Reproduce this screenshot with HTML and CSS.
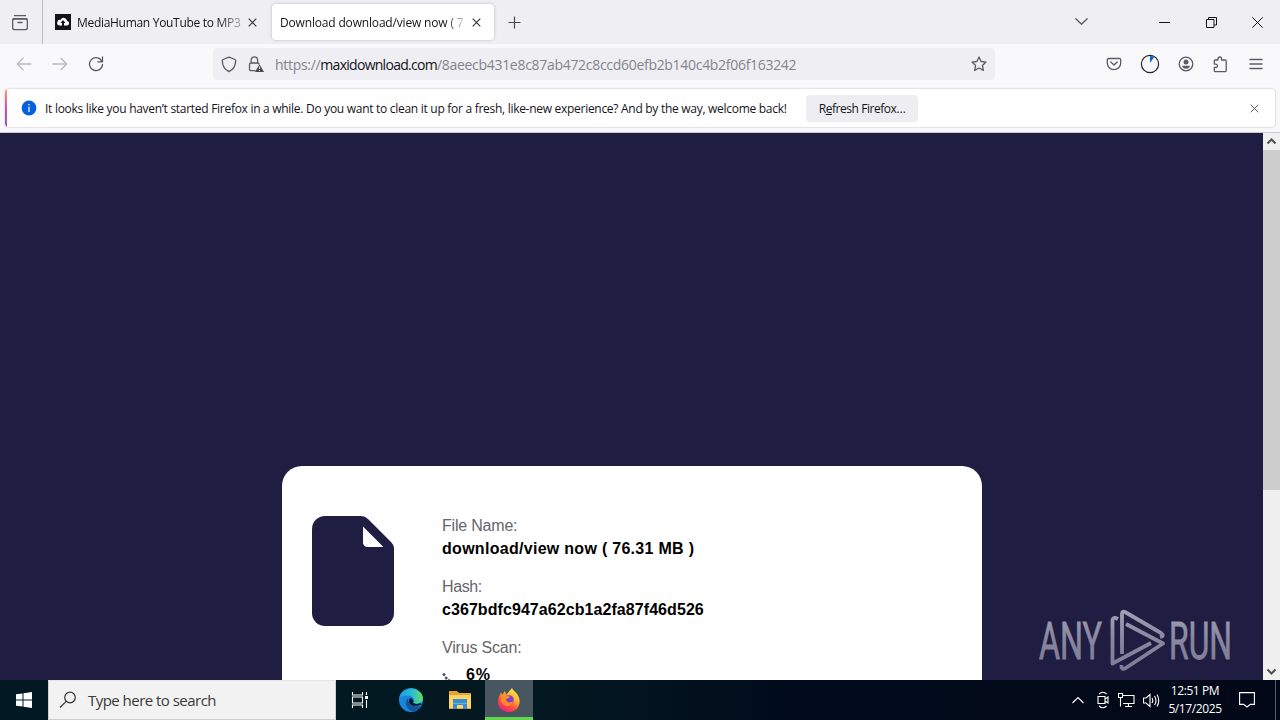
FILE: index.html
```html
<!DOCTYPE html>
<html lang="en">
<head>
<meta charset="utf-8">
<title>Download download/view now</title>
<link rel="stylesheet" href="styles.css">
</head>
<body>
<div class="screen">
  <header class="tabs">
    <div class="overview"><svg width="18" height="18" viewBox="0 0 18 18" class="line"><path d="M3.5 1.7h11M2 5h14"/><rect x="1.7" y="4.7" width="14.6" height="11" rx="2"/><path d="M7 8.5h4"/></svg></div>
    <div class="tab">
      <svg width="16" height="16" viewBox="0 0 16 16"><rect width="16" height="16" fill="#15141a"/><path d="M4.5 11.5h7a2.3 2.3 0 0 0 .6-4.6 3.4 3.4 0 0 0-6.5-1A2.8 2.8 0 0 0 4.5 11.500z" fill="#fff"/><path d="M8 6l2.500 3H9v3H7V9H5.500z" fill="#15141a"/></svg>
      <span class="tab-title t1">MediaHuman YouTube to MP3</span>
      <svg class="close" width="9" height="9" viewBox="0 0 9 9"><path d="M.7.7l7.600 7.600M8.300.7L.7 8.300"/></svg>
    </div>
    <div class="tab active">
      <span class="tab-title t2">Download download/view now ( 76.31 MB )</span>
      <svg class="close" width="9" height="9" viewBox="0 0 9 9"><path d="M.7.7l7.600 7.600M8.300.7L.7 8.300"/></svg>
    </div>
    <svg class="plus" width="13" height="13" viewBox="0 0 13 13"><path d="M6.500 .5v12M.5 6.500h12"/></svg>
    <div class="window-controls">
      <svg width="13" height="8" viewBox="0 0 13 8" class="line"><path d="M.8.8l5.700 5.500L12.200.8"/></svg>
      <svg class="minimize" width="11" height="11" viewBox="0 0 11 11"><path d="M0 5.500h11"/></svg>
      <svg class="restore" width="11" height="11" viewBox="0 0 11 11"><path d="M.5 2.500h7.500v8H.5zM2.500 2.500v-2h8v7.500H8"/></svg>
      <svg class="quit" width="11" height="11" viewBox="0 0 11 11"><path d="M.3.3l10.400 10.400M10.700.3L.3 10.700"/></svg>
    </div>
  </header>

  <nav class="toolbar">
    <div class="history">
      <svg width="16" height="14" viewBox="0 0 16 14" class="line faded"><path d="M15 7H1.500M7 1.300L1.300 7 7 12.700"/></svg>
      <svg width="16" height="14" viewBox="0 0 16 14" class="line faded"><path d="M1 7h13.500M9 1.300L14.700 7 9 12.700"/></svg>
      <svg width="16" height="16" viewBox="0 0 16 16" class="line"><path d="M13.700 5A6.500 6.500 0 1 0 14.500 8.500M14.500 1v4.800H9.700"/></svg>
    </div>
    <div class="urlbar">
      <svg width="16" height="17" viewBox="0 0 16 17" class="line"><path d="M8 1.200l6 2.300c.5.200.7.500.7 1 0 5-1.500 8.500-6.700 11.200C2.800 13 1.300 9.500 1.300 4.500c0-.5.200-.8.700-1z"/></svg>
      <svg class="lock" width="17" height="17" viewBox="0 0 17 17"><path d="M7 14.700H3a1.500 1.500 0 0 1-1.500-1.500V8.500A1.500 1.500 0 0 1 3 7h6.500c.8 0 1.300.3 1.500 1M3.200 7V4a3.200 3.200 0 0 1 6.400 0v3" class="line"/><path d="M11.500 8.200L16 16H7z" fill="#4c4b54"/><path d="M11.500 10.500v2.600M11.500 14v1" stroke="#eeeef2" stroke-width="1"/></svg>
      <span class="url">https://<b>maxidownload.com</b>/8aeecb431e8c87ab472c8ccd60efb2b140c4b2f06f163242</span>
      <svg class="star" width="16" height="16" viewBox="0 0 16 16"><path class="line" d="M8 1l2.100 4.500 4.900.6-3.600 3.300 1 5L8 12l-4.400 2.400 1-5L1 6.100l4.900-.6z"/></svg>
    </div>
    <div class="actions">
      <svg width="16" height="14" viewBox="0 0 16 14" class="line"><path d="M2.500 1.500h11a1.200 1.200 0 0 1 1.200 1.200V6a6.700 6.700 0 0 1-13.400 0V2.700a1.200 1.200 0 0 1 1.200-1.200zM4.800 5L8 8l3.200-3"/></svg>
      <svg width="20" height="20" viewBox="0 0 20 20"><circle cx="10" cy="10" r="8.600" fill="none" stroke="#24232c" stroke-width="1.200"/><path d="M10 9V2q2.300 0 4 1.200z" fill="#0762c8"/></svg>
      <svg width="16" height="16" viewBox="0 0 16 16"><circle cx="8" cy="8" r="6.800" class="line"/><circle cx="8" cy="6" r="2.500" fill="#5b5b66"/><path d="M4 9.800h8q-.7 3-4 3t-4-3z" fill="#5b5b66"/></svg>
      <svg width="16" height="17" viewBox="0 0 16 17"><path class="line" d="M6 4V2.800a1.800 1.800 0 0 1 3.600 0V4h3.600a1 1 0 0 1 1 1v9.700a1 1 0 0 1-1 1H3.300a1 1 0 0 1-1-1V11.500h1.500a1.700 1.700 0 0 0 0-3.400H2.300V5a1 1 0 0 1 1-1z"/></svg>
      <svg width="14" height="12" viewBox="0 0 14 12" class="line menu"><path d="M1 1.500h12M1 6h12M1 10.500h12"/></svg>
    </div>
  </nav>

  <div class="notice-wrap">
    <div class="notice">
      <svg width="16" height="16" viewBox="0 0 16 16"><circle cx="8" cy="8" r="7.400" fill="#0560df"/><path d="M8 4v1.500M8 6.800V12" stroke="#fff" stroke-width="1.200"/></svg>
      <span class="message">It looks like you haven’t started Firefox in a while. Do you want to clean it up for a fresh, like-new experience? And by the way, welcome back!</span>
      <button class="refresh"><span>R<u>e</u>fresh Firefox…</span></button>
      <svg class="close dismiss" width="9" height="9" viewBox="0 0 9 9"><path d="M.7.7l7.600 7.600M8.300.7L.7 8.300"/></svg>
    </div>
  </div>

  <div class="viewport">
    <main class="page">
      <section class="card">
        <svg class="file" width="82" height="110" viewBox="0 0 82 110"><path d="M13 0H49q4 0 7 3L79 26q3 3 3 6V97a13 13 0 0 1-13 13H13A13 13 0 0 1 0 97V13A13 13 0 0 1 13 0z" fill="#1f1d42"/><path d="M51 10.500L71.500 31H55.500a4.500 4.500 0 0 1-4.500-4.500z" fill="#fff"/></svg>
        <dl class="details">
          <dt class="d1">File Name:</dt><dd class="v1">download/view now ( 76.31 MB )</dd>
          <dt class="d2">Hash:</dt><dd class="v2">c367bdfc947a62cb1a2fa87f46d526</dd>
          <dt class="d3">Virus Scan:</dt>
          <dd class="scan"><svg width="24" height="16" viewBox="0 0 24 16"><g fill="#4c5964"><circle cx="2" cy="7.500" r="1.500"/><circle cx="4.200" cy="11" r="1.500"/><circle cx="7" cy="13" r="1"/></g></svg><span>6%</span></dd>
        </dl>
      </section>
      <svg class="watermark" width="200" height="64" viewBox="0 0 200 64">
        <defs><linearGradient id="fade" x1="0" y1="0" x2="0" y2="64" gradientUnits="userSpaceOnUse"><stop offset="0" stop-color="#a3a2b3"/><stop offset=".5" stop-color="#8987a0"/><stop offset="1" stop-color="#7d7b92"/></linearGradient></defs>
        <g fill="url(#fade)" stroke="url(#fade)" stroke-width=".8"><text x="3" y="51" textLength="63" lengthAdjust="spacingAndGlyphs">ANY</text><text x="133" y="51" textLength="63" lengthAdjust="spacingAndGlyphs">RUN</text></g>
        <g fill="none" stroke="url(#fade)" stroke-width="3.800" stroke-linejoin="round">
          <path d="M82 11Q76.500 8 76.500 13V55.500L115 35"/>
          <path d="M86 46V6Q86 2.500 89 4L125 25Q129 28 124 29"/>
          <path d="M90 16L127 35.500L89 60.500Q85 62 85.500 57"/>
        </g>
      </svg>
    </main>
    <div class="scrollbar">
      <svg width="17" height="17" viewBox="0 0 17 17"><path d="M4.500 10.500l4-4 4 4"/></svg>
      <div class="thumb"></div>
      <svg class="down" width="17" height="17" viewBox="0 0 17 17"><path d="M4.500 6.500l4 4 4-4"/></svg>
    </div>
  </div>

  <footer class="taskbar">
    <div class="start"><svg width="16" height="16" viewBox="0 0 16 16" fill="#fff"><path d="M0 2.300L6.500 1.400v6.100H0zM7.500 1.200L16 0v7.500H7.500zM0 8.500h6.500v6.100L0 13.700zM7.500 8.500H16V16l-8.500-1.200z"/></svg></div>
    <div class="search"><svg width="18" height="18" viewBox="0 0 18 18"><circle cx="11" cy="6.500" r="5.300"/><path d="M7.200 10.300L1 16.500"/></svg><span>Type here to search</span></div>
    <div class="app"><svg width="18" height="18" viewBox="0 0 18 18"><path d="M1.500 1v3h10V1M1.500 17v-3h10v3M1.500 6h10v6h-10zM15.500 1v3M15.500 9v8" fill="none" stroke="#fff" stroke-width="1.100"/><path d="M14 5h3v3h-3z" fill="#fff"/></svg></div>
    <div class="app edge"><svg width="24" height="24" viewBox="0 0 24 24"><defs><linearGradient id="edgeTop"><stop stop-color="#1d9fe8"/><stop offset=".55" stop-color="#28bfd0"/><stop offset="1" stop-color="#64dc65"/></linearGradient></defs><circle cx="12" cy="12" r="12" fill="#1687dc"/><path d="M.2 10C2 1 14-3 21 4c4 4 4 9 0 11-3 1.500-6 1-7-.5 2-2 1-6-4-7-4-.5-8 1-9.800 2.500z" fill="url(#edgeTop)"/><path d="M9 10c-5 5-1 12 5 13.500 4-.5 7-3 8.500-6C16 20 9 17 9 10z" fill="#14559e"/><path d="M11 10c-3 5 2 9 8 7.500l4-1-2-1.500c-3 1.500-6 1-7-.5 1-1 1-3-3-4.500z" fill="#031725"/></svg></div>
    <div class="app"><svg width="22" height="20" viewBox="0 0 22 20"><path d="M0 1h8l2 2h12v16H0z" fill="#e9a52b"/><path d="M0 5h22v13H0z" fill="#ffd365"/><path d="M4 9h14v10h-4v-4H8v4H4z" fill="#398dd0"/><path d="M4 13h14v1H4z" fill="#62b2e4"/></svg></div>
    <div class="app running"><svg width="24" height="24" viewBox="0 0 24 24"><defs><linearGradient id="fox" x1=".8" y1="0" x2=".2" y2="1"><stop stop-color="#fff44f"/><stop offset=".35" stop-color="#ffb52d"/><stop offset=".65" stop-color="#ff503b"/><stop offset="1" stop-color="#e41984"/></linearGradient></defs><path d="M15 0c1 3 3 3 5 6 6 8 1 18-8 18C2 24-1 15 2 9l2-5 1 3 3-4 1 4z" fill="url(#fox)"/><circle cx="12" cy="12" r="4.800" fill="#8142cf"/><path d="M4 8c3-2 5 0 8 0 2 1-1 3-3 3 0 3 3 5 7 2-1 5-7 7-10 3-2-2-3-5-2-8z" fill="#ff8b25"/></svg></div>
    <div class="tray">
      <svg class="chev" width="12" height="8" viewBox="0 0 12 8"><path d="M.5 7L6 1.500 11.500 7"/></svg>
      <svg class="cam" width="12" height="18" viewBox="0 0 12 18"><path d="M1 5.500h7v7H1zM8 8l3-2v6L8 10M2 3Q6-.5 9.500 3M2 15q4 3.500 7.500 0"/></svg>
      <svg class="net" width="17" height="15" viewBox="0 0 17 15"><path d="M5 2.500h11v8H5M10.500 10.500v3M7 13.500h7M.5.500h4v4h-4zM2.500 4.500v9"/></svg>
      <svg class="sound" width="17" height="15" viewBox="0 0 17 15"><path d="M.5 5h2.500L7 1.500v12L3 10H.5zM9 5q1.500 2.500 0 5M11.500 3q3 4.500 0 9M14 1.500q3.500 6 0 12"/></svg>
      <div class="clock"><span class="time">12:51 PM</span><span class="date">5/17/2025</span></div>
      <svg class="chat" width="16" height="16" viewBox="0 0 16 16"><path d="M.6.6h14.800v11.800h-4L8 15l-3.400-2.600h-4z"/></svg>
    </div>
    <div class="peek"></div>
  </footer>
</div>
</body>
</html>
```
FILE: styles.css
```css
* { box-sizing: border-box; }
body { margin: 0; font-family: "Open Sans", "Noto Sans", sans-serif; font-size: 12px; color: #15141a; }
svg { display: block; flex: none; }
.screen { width: 1280px; height: 720px; overflow: hidden; display: flex; flex-direction: column; background: #f9f9fb; }
.line { fill: none; stroke: #5b5b66; stroke-width: 1.300; stroke-linejoin: round; stroke-linecap: round; }
.faded { opacity: .4; }
.tabs { height: 44px; flex: none; background: #eeeef3; display: flex; align-items: center; }
.overview { width: 43px; height: 44px; padding: 14px 0 0 11px; border-right: 1px solid #bdbdc7; }
.tab { display: flex; align-items: center; width: 220px; height: 36px; margin-left: 4px; padding-left: 8px; }
.tab.active { width: 222px; margin-left: 5px; background: #fff; border-radius: 4px; box-shadow: 0 0 3px #8888968c; }
.tab-title { white-space: nowrap; overflow: hidden; }
.t1 { width: 164px; margin-left: 6px; letter-spacing: -.300px; -webkit-mask-image: linear-gradient(90deg, #000 140px, #0005 164px); }
.t2 { width: 184px; letter-spacing: -.170px; -webkit-mask-image: linear-gradient(90deg, #000 166px, #0003 184px); }
.close { margin-left: 7px; fill: none; stroke: #33323b; stroke-width: 1.100; }
.tab.active .close { margin-left: 8px; }
.plus { margin-left: 14px; fill: none; stroke: #4b4a54; stroke-width: 1.200; }
.window-controls { margin-left: auto; margin-right: 17px; display: flex; align-items: center; fill: none; stroke: #15141a; stroke-width: 1; }
.minimize { margin-left: 71px; }
.restore { margin-left: 36px; }
.quit { margin-left: 35px; }
.toolbar { height: 44px; flex: none; display: flex; align-items: center; padding-bottom: 4px; }
.history { width: 213px; padding-left: 16px; display: flex; align-items: center; gap: 20px; }
.urlbar { width: 782px; height: 32px; background: #eeeef3; border-radius: 4px; display: flex; align-items: center; padding-left: 8px; }
.lock { margin-left: 11px; }
.url { margin-left: 10px; font-size: 14px; color: #85848d; letter-spacing: -.300px; white-space: nowrap; }
.url b { font-weight: 400; color: #15141a; letter-spacing: -.720px; }
.star { margin-left: auto; margin-right: 8px; }
.actions { display: flex; align-items: center; gap: 18px; margin-left: auto; margin-right: 17px; }
.actions .menu { margin-left: 3px; }
.notice-wrap { height: 45px; flex: none; padding: 1px 5px 4px 5px; border-bottom: 1px solid #cbcbd1; }
.notice { height: 38px; display: flex; align-items: center; background: #fff; border-radius: 4px; box-shadow: 0 0 2px #aaa9b4; padding-left: 16px; position: relative; overflow: hidden; }
.notice::before { content: ""; position: absolute; left: 0; top: 0; bottom: 0; width: 2px; background: linear-gradient(#f5a066, #d94f9c, #9059c0); }
.message { width: 742px; margin-left: 8px; white-space: nowrap; letter-spacing: -.285px; }
.refresh { width: 112px; height: 27px; margin-left: 19px; border: 0; border-radius: 4px; background: #eeeef2; font: inherit; color: inherit; padding: 0; }
.refresh span { letter-spacing: -.450px; }
.dismiss { margin-left: auto; margin-right: 16px; stroke: #5b5b66; stroke-width: 1; }
.viewport { flex: 1; min-height: 0; display: flex; }
.page { width: 1263px; background: #1f1d42; overflow: hidden; position: relative; font-family: "Liberation Sans", Arial, sans-serif; }
.card { width: 700px; height: 400px; margin: 333px 0 0 282px; padding: 50px 30px; background: #fff; border-radius: 20px; display: flex; gap: 48px; }
.details { margin: 0; font-size: 16px; line-height: 23px; color: #000; white-space: nowrap; }
.details dt { margin-top: 15px; height: 23px; color: #66666b; }
.details dt:first-child { margin-top: -2px; }
.details dd { margin: 0; height: 23px; font-weight: 700; }
.d1 { letter-spacing: -.200px; }
.d2 { letter-spacing: -.400px; }
.d3 { letter-spacing: -.180px; }
.v1 { letter-spacing: .290px; }
.v2 { letter-spacing: .070px; }
.details .scan { display: flex; align-items: center; padding-top: 8px; letter-spacing: .800px; }
.watermark { position: absolute; left: 1036px; top: 475px; font: 400 52px Roboto, sans-serif; }
.scrollbar { width: 17px; background: #f0f0f0; display: flex; flex-direction: column; fill: none; stroke: #505050; stroke-width: 2; }
.thumb { height: 340px; background: #cdcdcd; }
.down { margin-top: auto; }
.taskbar { height: 40px; flex: none; background: linear-gradient(90deg, #021923 0, #031821 540px, #010b1b 800px, #020817); display: flex; color: #fff; }
.start { width: 48px; padding: 12px 0 0 16px; }
.search { width: 288px; background: #f2f2f2; border: 1px solid #cfcfcf; border-top-color: #e5e5e5; color: #3a3a3a; display: flex; align-items: center; padding-left: 10px; font-size: 15px; letter-spacing: -.530px; }
.search svg { fill: none; stroke: #333; stroke-width: 1.200; margin-right: 11px; }
.app { width: 48px; margin-left: 1px; display: flex; align-items: center; justify-content: center; }
.app:nth-child(3) { margin-left: 0; }
.app.edge { margin-left: 3px; }
.running { background: #48575f; border-bottom: 3px solid #62d74b; padding-top: 2px; }
.tray { margin-left: auto; display: flex; align-items: center; fill: none; stroke: #fff; stroke-width: 1.100; }
.chev { margin-right: 1px; }
.cam { margin-left: 12px; }
.net { margin-left: 9px; }
.sound { margin-left: 8px; }
.clock { width: 58px; margin-left: 6px; display: flex; flex-direction: column; align-items: center; line-height: 18px; letter-spacing: -.400px; white-space: nowrap; }
.chat { margin-left: 15px; }
.peek { width: 5px; border-left: 1px solid #58606c; margin-left: 20px; }
```
